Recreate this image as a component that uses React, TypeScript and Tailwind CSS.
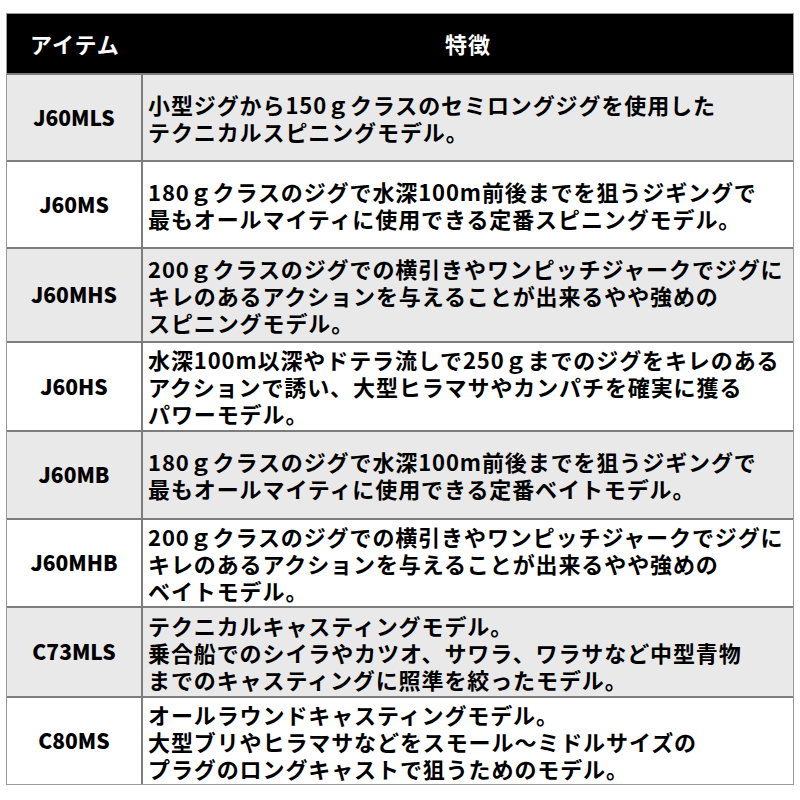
const rows: { item: string; lines: string[]; h: string }[] = [
  { item: "J60MLS", lines: ["小型ジグから150ｇクラスのセミロングジグを使用した", "テクニカルスピニングモデル。"], h: "h-[87px]" },
  { item: "J60MS", lines: ["180ｇクラスのジグで水深100m前後までを狙うジギングで", "最もオールマイティに使用できる定番スピニングモデル。"], h: "h-[87px]" },
  { item: "J60MHS", lines: ["200ｇクラスのジグでの横引きやワンピッチジャークでジグに", "キレのあるアクションを与えることが出来るやや強めの", "スピニングモデル。"], h: "h-[94px]" },
  { item: "J60HS", lines: ["水深100m以深やドテラ流しで250ｇまでのジグをキレのある", "アクションで誘い、大型ヒラマサやカンパチを確実に獲る", "パワーモデル。"], h: "h-[89px]" },
  { item: "J60MB", lines: ["180ｇクラスのジグで水深100m前後までを狙うジギングで", "最もオールマイティに使用できる定番ベイトモデル。"], h: "h-[88px]" },
  { item: "J60MHB", lines: ["200ｇクラスのジグでの横引きやワンピッチジャークでジグに", "キレのあるアクションを与えることが出来るやや強めの", "ベイトモデル。"], h: "h-[88px]" },
  { item: "C73MLS", lines: ["テクニカルキャスティングモデル。", "乗合船でのシイラやカツオ、サワラ、ワラサなど中型青物", "までのキャスティングに照準を絞ったモデル。"], h: "h-[90px]" },
  { item: "C80MS", lines: ["オールラウンドキャスティングモデル。", "大型ブリやヒラマサなどをスモール～ミドルサイズの", "プラグのロングキャストで狙うためのモデル。"], h: "h-[88px]" },
];

export default function App() {
  return (
    <div className="h-[800px] w-[800px] bg-white pl-[6px] pt-[13px] font-['Noto_Sans_CJK_JP','Noto_Sans',sans-serif] text-black">
      <div className="w-[788px] border border-[#9a9a9a]">
        <div className="grid h-[59px] grid-cols-[136px_1fr] bg-black text-[22px] font-bold tracking-[1px] text-white">
          <div className="flex items-center pl-[23px]">アイテム</div>
          <div className="flex items-center justify-center">特徴</div>
        </div>
        {rows.map((r, i) => (
          <div
            key={r.item}
            className={`grid grid-cols-[136px_1fr] border-t-2 border-[#7d7d7d] ${r.h} ${i % 2 === 0 ? "bg-[#e9e9e9]" : "bg-white"}`}
          >
            <div className="flex items-center justify-center border-r-2 border-[#7d7d7d] text-[21px] font-black">
              {r.item}
            </div>
            <div className="flex flex-col justify-center pl-[5px] text-[22px] font-bold leading-[27px] tracking-[0.9px]">
              {r.lines.map((l) => (
                <div key={l} className="whitespace-nowrap">{l}</div>
              ))}
            </div>
          </div>
        ))}
      </div>
    </div>
  );
}
